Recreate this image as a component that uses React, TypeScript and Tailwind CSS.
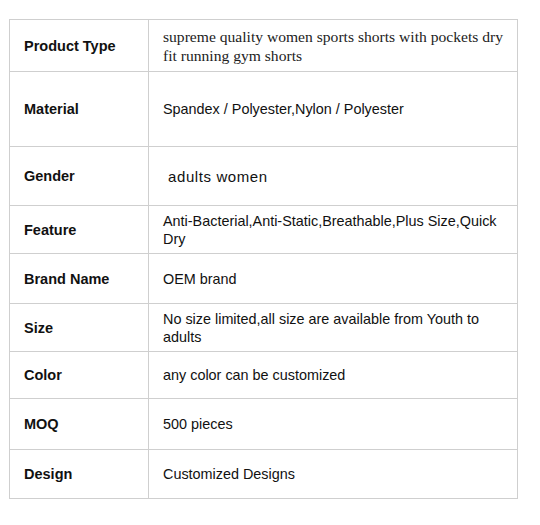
import React from "react";

const rows: { label: string; value: string; h: number; kind?: "serif" | "big" }[] = [
  { label: "Product Type", value: "supreme quality women sports shorts with pockets dry fit running gym shorts", h: 52, kind: "serif" },
  { label: "Material", value: "Spandex / Polyester,Nylon / Polyester", h: 75 },
  { label: "Gender", value: "adults women", h: 59, kind: "big" },
  { label: "Feature", value: "Anti-Bacterial,Anti-Static,Breathable,Plus Size,Quick Dry", h: 48 },
  { label: "Brand Name", value: "OEM brand", h: 50 },
  { label: "Size", value: "No size limited,all size are available from Youth to adults", h: 48 },
  { label: "Color", value: "any color can be customized", h: 47 },
  { label: "MOQ", value: "500 pieces", h: 51 },
  { label: "Design", value: "Customized Designs", h: 49 },
];

export default function App() {
  return (
    <div className="w-[540px] h-[525px] bg-white pt-[19px] pl-[9px]" style={{ fontFamily: '"Liberation Sans", Arial, sans-serif' }}>
      <table className="border-collapse w-[509px] table-fixed text-[#111]">
        <colgroup>
          <col className="w-[139px]" />
          <col />
        </colgroup>
        <tbody>
          {rows.map((r) => (
            <tr key={r.label} style={{ height: r.h }}>
              <td className="border border-[#cfcfcf] pl-[14px] pr-2 align-middle font-bold text-[14.5px] leading-[18px]">
                {r.label}
              </td>
              <td className="border border-[#cfcfcf] pl-[14px] pr-2 align-middle">
                {r.kind === "serif" ? (
                  <div className="text-[15.6px] leading-[19px] text-[#222] w-[350px]" style={{ fontFamily: '"Liberation Serif", "Times New Roman", serif' }}>
                    {r.value}
                  </div>
                ) : r.kind === "big" ? (
                  <div className="pl-[5px] pt-[2px] text-[15px] leading-[18px] tracking-[0.6px]">{r.value}</div>
                ) : (
                  <div className="text-[14.4px] leading-[18px]">{r.value}</div>
                )}
              </td>
            </tr>
          ))}
        </tbody>
      </table>
    </div>
  );
}
